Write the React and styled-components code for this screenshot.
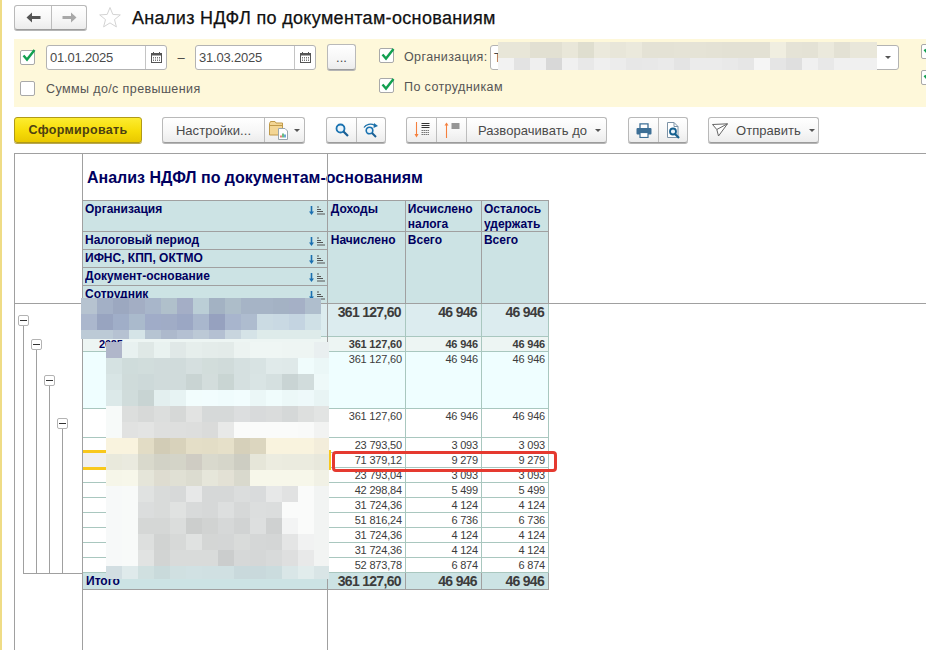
import React from 'react';
import styled, { createGlobalStyle } from 'styled-components';

const GlobalStyle = createGlobalStyle`
  html, body { margin: 0; padding: 0; height: 100%; background: #fff; }
  body { font-family: "Liberation Sans", Arial, sans-serif; overflow: hidden; }
  #root { height: 100%; }
`;

// размытые участки скриншота
const orgBlur = [
  ['#e8e6d8','#e8e6d8','#e2e0d2','#e2e0d2','#e9e7d9','#dfdecf','#ebe9dc','#e8e6d9','#ebe9dc','#e4e2d5','#e4e2d5','#e5e3d6','#e5e3d6','#e4e2d5','#e3e1d4','#e3e1d4','#e3e1d4','#f0eee0','#e5e3d6','#e4e2d5','#ebe9dc','#e3e1d4','#e9e7da','#e9e7da'],
  ['#f2f2f2','#e3e3e3','#efefef','#d8d8d8','#f0f0f0','#e8e8e8','#efefef','#ececec','#e7e7e7','#e8e8e8','#eaeaea','#e4e4e4','#ebebeb','#ebebeb','#e9e9e9','#e6e6e6','#f5f5f5','#e5e5e5','#dfdfdf','#f0f0f0','#e8e8e8','#f0f0f0','#f0f0f0','#f0f0f0'],
];

const topBlur = [
  ['#b6c3d0','#a3b0c6','#9ca8c0','#a3aec4','#a8b6ca','#b0c0cb','#a4aec6','#bbced6','#a3b2c3','#adbdc9','#a6b4c6','#a6b4c6','#a4b2c4','#a5b0c6','#afbecd'],
  ['#abb7cd','#98a4c0','#a0aec8','#aabacc','#a0acc8','#a0acc6','#9ba7c4','#a9b7cd','#96a1bf','#a8b5cd','#aebccf','#cbdbe3','#c9d9e3','#c4d4e1','#cfe0e6'],
  ['#bccad6','#bccad6','#b6c2d2','#d5e4e7','#b6c4d2','#adb9cc','#b4c0d2','#bcc9d6','#b4c0d2','#c8d5de','#d5e3e7','#deebea','#deebea','#deebea','#deebea'],
];

const rowsBlur = [
  ['#b0b6ca','#e8f1f0','#dfe8e6','#e9f2f0','#e0e8e7','#e6eeec','#e4ecea','#e3ebe9','#ecf3f1','#eff6f4','#eff6f4','#eef5f3','#eef5f3','#e9eff0'],
  ['#d5e2e2','#cfdcdb','#d1dddc','#d0dbdb','#d0dbdb','#d5dfdf','#d2dddb','#d0dbda','#d5e0e0','#d8e3e3','#e0eaea','#dfe9e9','#f0fcfc','#ebf7f7'],
  ['#d8e5e5','#cfdbda','#cdd9d9','#d0dbdb','#d0dbdb','#c9d4d3','#d3dddc','#c9d5d3','#d5e0e0','#d9e4e4','#d5e0e0','#c9d4d4','#d1dcdc','#eef9f9'],
  ['#dce9e9','#d0dcdb','#c8d4d3','#e3efef','#e7f3f3','#f2fdfd','#f2fdfe','#f0fcfd','#f2fdfe','#ebf7f7','#f0fcfc','#ecf8f8','#eef9fa','#e8f4f4'],
  ['#f7faf9','#dcdedd','#d7d9d8','#dcdedd','#d6d8d7','#e2e3e2','#d6d9d9','#d6d9d9','#dcdedf','#d8dadb','#dadcdc','#d5d8d8','#dddfde','#e2e4e3'],
  ['#f7faf9','#e1e2e1','#e3e4e3','#dedfde','#dedfde','#dddedd','#dadbda','#e8e9e8','#fafbfa','#fafbfa','#fafbfa','#fafbfa','#f9faf9','#f2f3f2'],
  ['#f9f3de','#f9f3de','#e2dcc5','#d2ccb6','#d8d2bb','#e4dec7','#e3ddc6','#e6e0c9','#d6d0ba','#dcd6bf','#f9f3de','#f9f3de','#f9f3de','#f3eddb'],
  ['#e9e9dc','#eaeadf','#d9d9cc','#d2d2c6','#d4d4c8','#cfccc3','#d9d9cd','#d6d6ca','#cdcdc2','#e6e6d9','#ecece0','#ebebdf','#ebebdf','#e8e8dc'],
  ['#f6f6e9','#f7f7ea','#e5e5d9','#dedcd0','#e0e0d4','#dcdcd0','#e6e6da','#e3e1d5','#d9d9cd','#f7f7ea','#f7f7ea','#f7f7ea','#f7f7ea','#f1f1e5'],
  ['#f7f9f9','#f8faf9','#e0e2e1','#d9dbda','#d7d9d9','#e7e8e8','#d6d8d8','#d6d8d8','#dbdddd','#d9dbdc','#e7e8e8','#e1e2e2','#fafbfa','#f2f4f3'],
  ['#f7f9f9','#f8faf9','#dbdddd','#d9dbda','#e0e2e1','#d8dada','#d6d8d8','#dddfdf','#d6d8d8','#dcdede','#dbdddd','#fafbfa','#fafbfa','#f2f4f3'],
  ['#f7f9f9','#f8faf9','#d5d7d6','#d5d7d6','#dbdddc','#cccecd','#d1d3d2','#d6d8d8','#d1d3d3','#dddfdf','#cfd1d1','#f3f4f4','#fafbfa','#f2f4f3'],
  ['#f7f9f9','#f8faf9','#dddfde','#d1d3d2','#d7d9d8','#e0e2e1','#d4d6d5','#d4d6d6','#d9dbda','#d5d7d7','#d4d6d6','#e4e5e5','#f1f2f2','#f2f4f3'],
  ['#f7f9f9','#f8faf9','#e1e3e2','#d2d4d3','#d9dbda','#d9dbda','#d9dbda','#cbcdcd','#d6d8d8','#d5d7d7','#d8dada','#dedfdf','#e8e9e9','#f2f4f3'],
  ['#d2dee2','#dfeaeb','#d0e0e0','#c9dadb','#d0e0e1','#d1e1e3','#d0e0e2','#d0e0e2','#c9d9dc','#c9d9dc','#cbdcde','#d9e6e7','#e1ecec','#d9e5e6'],
];

const detailRows = [
  ['23 793,50', '3 093'],
  ['71 379,12', '9 279', true],
  ['23 793,04', '3 093'],
  ['42 298,84', '5 499'],
  ['31 724,36', '4 124'],
  ['51 816,24', '6 736'],
  ['31 724,36', '4 124'],
  ['31 724,36', '4 124'],
  ['52 873,78', '6 874'],
];

const Page = styled.div`
  height: 650px;
  overflow: hidden;
  border-left: 2px solid #efdc86;
  padding-left: 12px;
  box-sizing: border-box;
`;

const TitleBar = styled.div`
  height: 39px;
  display: flex;
  align-items: flex-start;
  padding-top: 5px;
  box-sizing: border-box;
`;

const ButtonGroup = styled.div`
  display: flex;
  height: ${p => p.$h || 25}px;
  box-sizing: border-box;
  border: 1px solid #b9b9b9;
  border-bottom-color: #9c9c9c;
  border-radius: 3px;
  background: linear-gradient(#ffffff, #f6f6f6 60%, #ececec);
  box-shadow: 0 1px 0 #b5b5b5;
  color: #4a4a4a;
  font-size: 13px;
  letter-spacing: 0.05px;
  margin-left: ${p => p.$ml || 0}px;
`;

const GroupCell = styled.div`
  width: ${p => p.$w}px;
  display: flex;
  align-items: center;
  justify-content: center;
  gap: ${p => p.$gap || 0}px;
  padding-left: ${p => p.$pl || 0}px;
  box-sizing: border-box;
  & + & { border-left: 1px solid #bdbdbd; }
`;

const StarWrap = styled.div`
  margin: 0 10px 0 11px;
  height: 24px;
  display: flex;
  align-items: center;
`;

const PageTitle = styled.h1`
  margin: 0;
  font-size: 18px;
  line-height: 26px;
  font-weight: normal;
  color: #111;
  letter-spacing: 0.33px;
  -webkit-text-stroke: 0.25px #111;
`;

const FilterPanel = styled.div`
  height: 68px;
  background: #fef8da;
  display: flex;
  padding: 5px 0 0 6px;
  box-sizing: border-box;
`;

const FilterColumn = styled.div`
  width: ${p => p.$w}px;
  flex: none;
  display: flex;
  flex-direction: column;
  gap: ${p => p.$gap}px;
`;

const FilterRow = styled.div`
  display: flex;
  align-items: center;
  height: ${p => p.$h}px;
`;

const Check = styled.span`
  width: 15px;
  height: 15px;
  flex: none;
  box-sizing: border-box;
  border: 1px solid #a9a9a9;
  border-radius: 2px;
  background: #fff;
  display: inline-flex;
  align-items: center;
  justify-content: center;
  margin-right: ${p => p.$mr || 0}px;
  margin-bottom: ${p => p.$mb || 0}px;
`;

const FieldLabel = styled.span`
  font-size: 12.5px;
  color: #555;
  letter-spacing: 0.4px;
  white-space: nowrap;
  width: ${p => (p.$w ? `${p.$w}px` : 'auto')};
`;

const Field = styled.div`
  position: relative;
  width: ${p => p.$w}px;
  height: 25px;
  box-sizing: border-box;
  display: flex;
  flex: none;
  background: #fff;
  border: 1px solid #b3b3b3;
  border-radius: 3px;
  font-size: 13px;
  color: #4a4a4a;
`;

const FieldValue = styled.div`
  flex: 1;
  padding-left: 3px;
  line-height: 23px;
  letter-spacing: -0.2px;
`;

const FieldButton = styled.div`
  width: ${p => p.$w}px;
  flex: none;
  display: flex;
  align-items: center;
  justify-content: center;
  border-left: 1px solid #c4c4c4;
`;

const Dash = styled.span`
  width: 28px;
  text-align: center;
  font-size: 13px;
  color: #444;
`;

const Mosaic = styled.div`
  position: absolute;
  left: ${p => p.$left}px;
  top: ${p => p.$top}px;
  display: grid;
  grid-template-columns: repeat(${p => p.$cols}, 16px);
  grid-auto-rows: 16px;
  overflow: hidden;
  z-index: 4;
  width: ${p => p.$width}px;
  height: ${p => p.$height}px;
`;

const Toolbar = styled.div`
  margin-top: 10px;
  display: flex;
  height: 27px;
`;

const MainButton = styled.button`
  width: 128px;
  height: 26px;
  padding: 0;
  box-sizing: border-box;
  border: 1px solid #b09a18;
  border-radius: 3px;
  background: linear-gradient(#fdec30, #f6dc08 55%, #e9c800);
  box-shadow: 0 1px 0 #b9a850;
  font-family: inherit;
  font-weight: bold;
  font-size: 12.5px;
  letter-spacing: 0.3px;
  color: #4c4012;
  margin-right: 20px;
`;

const ToolGroup = styled(ButtonGroup)`
  height: 26px;
  margin-right: ${p => p.$mr}px;
`;

const Caret = styled.span`
  width: 0;
  height: 0;
  border-left: 3px solid transparent;
  border-right: 3px solid transparent;
  border-top: 3px solid #555;
`;

const Report = styled.div`
  position: relative;
  margin-top: 9px;
  height: 497px;
  display: flex;
  border-left: 1px solid #a0a0a0;
  border-top: 1px solid #a0a0a0;
`;

const Gutter = styled.div`
  width: 67px;
  flex: none;
  border-right: 1px solid #a0a0a0;
`;

const GutterHead = styled.div`
  height: 150px;
`;

const TreeLevels = styled.div`
  display: flex;
  margin-left: 8px;
  height: 269px;
  border-bottom: 1px solid #a0a0a0;
`;

const TreeLevel = styled.div`
  width: 13px;
  flex: none;
  display: flex;
  flex-direction: column;
  padding-top: ${p => p.$top}px;
  box-sizing: border-box;
`;

const TreeBox = styled.div`
  width: 11px;
  height: 11px;
  margin-left: -5px;
  flex: none;
  box-sizing: border-box;
  border: 1px solid #b3b3b3;
  border-radius: 2px;
  background: #fff;
  display: flex;
  align-items: center;
  justify-content: center;
  &::before {
    content: '';
    width: 7px;
    height: 1px;
    background: #333;
  }
`;

const TreeLine = styled.div`
  flex: 1;
  border-left: 1px solid #a0a0a0;
`;

const Sheet = styled.div`
  flex: 1;
`;

const ReportTitle = styled.div`
  height: 46px;
  padding: 14px 0 0 4px;
  box-sizing: border-box;
  font-size: 16px;
  line-height: 20px;
  font-weight: bold;
  color: #00005f;
`;

const Grid = styled.table`
  position: relative;
  z-index: 1;
  border-collapse: collapse;
  table-layout: fixed;
  width: 466px;
`;

const HeadRow = styled.tr`
  height: ${p => p.$h}px;
`;

const HeadCell = styled.td`
  background: #cce3e4;
  border: 1px solid #a0a0a0;
  border-left-width: ${p => (p.$first ? 0 : 1)}px;
  padding: 1px 2px 0 ${p => p.$pl || 2}px;
  vertical-align: top;
  font-size: 12px;
  line-height: 15px;
  font-weight: bold;
  color: #00005f;
`;

const HeadInner = styled.div`
  display: flex;
  justify-content: space-between;
  height: ${p => p.$h}px;
  overflow: hidden;
`;

const BodyRow = styled.tr`
  height: ${p => p.$h}px;
  background: ${p => p.$bg};
`;

const BodyCell = styled.td`
  position: relative;
  border: 1px solid #a9c7bf;
  border-left-width: ${p => (p.$first ? 0 : 1)}px;
  padding: ${p => (p.$big ? '0 4px 0 0' : p.$bold ? '1px 3px 0 0' : '0 3px 0 0')};
  vertical-align: top;
  text-align: right;
  font-size: ${p => (p.$big ? 14 : 11)}px;
  letter-spacing: ${p => (p.$big ? -0.7 : -0.2)}px;
  line-height: ${p => (p.$big ? 17 : p.$bold ? 13 : 14)}px;
  font-weight: ${p => (p.$bold ? 'bold' : 'normal')};
  color: #3c3c3c;
  white-space: nowrap;
`;

const YearCell = styled(BodyCell)`
  text-align: left;
  padding-left: 16px;
  color: #00005f;
`;

const CurrentCell = styled(BodyCell)`
  background: #f0f0f0;
  &::after {
    content: '';
    position: absolute;
    left: 0;
    right: -4px;
    top: -3px;
    bottom: -3px;
    border: solid #f8c81c;
    border-width: 3px 3px 3px 0;
    z-index: 3;
  }
`;

const TotalCell = styled.td`
  border: 1px solid #a0a0a0;
  border-left-width: ${p => (p.$first ? 0 : 1)}px;
  background: #cce3e4;
  padding: 0 ${p => (p.$first ? 3 : 4)}px 0 ${p => (p.$first ? 3 : 0)}px;
  text-align: ${p => (p.$first ? 'left' : 'right')};
  font-size: ${p => (p.$first ? 12 : 14)}px;
  letter-spacing: ${p => (p.$first ? 0 : -0.7)}px;
  line-height: 15px;
  font-weight: bold;
  color: ${p => (p.$first ? '#00005f' : '#3c3c3c')};
  white-space: nowrap;
`;

const FreezeV = styled.div`
  position: absolute;
  left: 312px;
  top: 0;
  bottom: 0;
  width: 1px;
  background: #a0a0a0;
  z-index: 2;
`;

const FreezeH = styled.div`
  position: absolute;
  left: 0;
  right: 0;
  top: 149px;
  height: 1px;
  background: #a0a0a0;
`;

const RedFrame = styled.div`
  position: absolute;
  left: 317px;
  top: 297px;
  width: 225px;
  height: 21px;
  box-sizing: border-box;
  border: 3px solid #e53a30;
  border-radius: 4px;
  z-index: 5;
`;

const BackIcon = ({ color, flip }) => (
  <svg width="15" height="11" viewBox="0 0 15 11" style={flip ? { transform: 'scaleX(-1)' } : undefined}>
    <path d="M0.5 5.5 6 0.5V4H14.5V7H6V10.5Z" fill={color} />
  </svg>
);

const StarIcon = () => (
  <svg width="24" height="24" viewBox="0 0 24 24">
    <path d="M12 2.5 14.8 9.4 22.3 9.9 16.5 14.6 18.4 21.9 12 17.9 5.6 21.9 7.5 14.6 1.7 9.9 9.2 9.4Z" fill="#fff" stroke="#d4d4d4" strokeWidth="1" />
  </svg>
);

const CheckMark = () => (
  <svg width="15" height="15" viewBox="0 0 15 15" style={{ flex: 'none', margin: '-3px -2px 0 0' }}>
    <path d="M2.5 7.5 6 11.5 13.5 2" fill="none" stroke="#12a050" strokeWidth="2.4" />
  </svg>
);

const CalendarIcon = () => (
  <svg width="11" height="11" viewBox="0 0 11 11">
    <path d="M2.5 0v2M8.5 0v2" stroke="#555" />
    <rect x="0.5" y="1.5" width="10" height="9" fill="#fff" stroke="#555" />
    <rect x="0.5" y="1.5" width="10" height="2" fill="#555" />
    <path d="M2 5.5h7M2 7h7M2 8.5h7" stroke="#777" strokeDasharray="1 1" />
  </svg>
);

const SettingsIcon = () => (
  <svg width="20" height="20" viewBox="0 0 20 20">
    <path d="M0.5 3.5 1.5 1.5H6L7 3H13.5V15H0.5Z" fill="#f3d695" stroke="#c09a4a" />
    <path d="M0.5 5.5H13.5" stroke="#c09a4a" />
    <path d="M9.5 8.5H16L18.5 11V19.5H9.5Z" fill="#fff" stroke="#9aa6ae" />
    <path d="M12 17.5v-2" stroke="#e2574c" strokeWidth="1.5" />
    <path d="M14 17.5v-4" stroke="#3ea65a" strokeWidth="1.5" />
    <path d="M16 17.5v-3" stroke="#3a88c8" strokeWidth="1.5" />
  </svg>
);

const SearchIcon = () => (
  <svg width="14" height="14" viewBox="0 0 14 14">
    <circle cx="5.5" cy="5.5" r="4" fill="#eaf4fb" stroke="#1a72b0" strokeWidth="1.8" />
    <path d="M8.5 8.5 13 13" stroke="#1a5f94" strokeWidth="2.2" />
  </svg>
);

const SearchAgainIcon = () => (
  <svg width="16" height="15" viewBox="0 0 16 15">
    <path d="M1 4.5C3 1 8 0.2 11.5 2.2" fill="none" stroke="#1a6fa8" strokeWidth="1.3" />
    <path d="M11 0 15 3 10.5 5Z" fill="#1a6fa8" />
    <circle cx="6.5" cy="7.5" r="3.3" fill="#eaf4fb" stroke="#1a72b0" strokeWidth="1.6" />
    <path d="M9 10 13 14" stroke="#1a5f94" strokeWidth="2" />
  </svg>
);

const SortIcon = ({ up }) => (
  <svg width="16" height="16" viewBox="0 0 16 16">
    {up ? (
      <>
        <path d="M2.5 16V2" stroke="#f5803e" strokeWidth="1.1" />
        <path d="M0.5 3.5 2.5 0.5 4.5 3.5Z" fill="#f5803e" />
        <path d="M7.5 2h8M7.5 4h8M7.5 6h8" stroke="#333" strokeWidth="1" />
      </>
    ) : (
      <>
        <path d="M2.5 0V13" stroke="#f5803e" strokeWidth="1.1" />
        <path d="M0.5 12 2.5 15.5 4.5 12Z" fill="#f5803e" />
        <path d="M7.5 1.5h8M7.5 3.5h8M7.5 5.5h8" stroke="#333" strokeWidth="1" />
        <path d="M7.5 8.5h8M7.5 10.5h8M7.5 12.5h8" stroke="#777" strokeWidth="1" strokeDasharray="1.5 0.5" />
      </>
    )}
  </svg>
);

const PrintIcon = () => (
  <svg width="16" height="15" viewBox="0 0 16 15">
    <path d="M4 6V0.8H12V6" fill="#fff" stroke="#3d6f96" strokeWidth="1.3" />
    <rect x="0.5" y="5" width="15" height="6.5" rx="1" fill="#3d6f96" />
    <rect x="4" y="9.5" width="8" height="5" fill="#fff" stroke="#3d6f96" strokeWidth="1.2" />
  </svg>
);

const PreviewIcon = () => (
  <svg width="15" height="17" viewBox="0 0 15 17">
    <path d="M1.5 0.5H8L12 4.5V15.5H1.5Z" fill="#fff" stroke="#7d93a6" />
    <path d="M8 0.5V4.5H12" fill="none" stroke="#7d93a6" />
    <circle cx="7" cy="9.5" r="3" fill="#eaf4fb" stroke="#15608f" strokeWidth="1.8" />
    <path d="M9 12 13 16" stroke="#15608f" strokeWidth="2.2" />
  </svg>
);

const SendIcon = () => (
  <svg width="16" height="14" viewBox="0 0 16 14">
    <path d="M0.5 1.5 15.5 0.8 6.5 13 4.8 6.5ZM4.8 6.5 15.5 0.8" fill="#fff" stroke="#666" strokeWidth="1" strokeLinejoin="round" />
  </svg>
);

const ColumnSortIcon = () => (
  <svg width="16" height="10" viewBox="0 0 16 10" style={{ flex: 'none', marginTop: 3 }}>
    <path d="M2.5 1V7" stroke="#1a6fb0" strokeWidth="1.6" />
    <path d="M0 6.5H5L2.5 10Z" fill="#1a6fb0" />
    <path d="M8 2H10M8 4.5H12M8 6.5H14M8 9H16" stroke="#555" strokeWidth="1" />
  </svg>
);

const Blur = ({ rows, ...rest }) => (
  <Mosaic $cols={rows[0].length} {...rest}>
    {rows.flat().map((color, i) => (
      <div key={i} style={{ background: color }} />
    ))}
  </Mosaic>
);

const Checkbox = ({ checked, mr, mb }) => <Check $mr={mr} $mb={mb}>{checked && <CheckMark />}</Check>;

const DateField = ({ value }) => (
  <Field $w={121}>
    <FieldValue>{value}</FieldValue>
    <FieldButton $w={20}><CalendarIcon /></FieldButton>
  </Field>
);

const LeftHead = ({ title, h }) => (
  <HeadInner $h={h}>
    <span>{title}</span>
    <ColumnSortIcon />
  </HeadInner>
);

const App = () => (
  <Page>
    <GlobalStyle />
    <TitleBar>
      <ButtonGroup>
        <GroupCell $w={36}><BackIcon color="#555" /></GroupCell>
        <GroupCell $w={35}><BackIcon color="#a8a8a8" flip /></GroupCell>
      </ButtonGroup>
      <StarWrap><StarIcon /></StarWrap>
      <PageTitle>Анализ НДФЛ по документам-основаниям</PageTitle>
    </TitleBar>

    <FilterPanel>
      <FilterColumn $w={359} $gap={11}>
        <FilterRow $h={26}>
          <Checkbox checked mr={11} />
          <DateField value="01.01.2025" />
          <Dash>–</Dash>
          <DateField value="31.03.2025" />
          <ButtonGroup $h={26} $ml={11}>
            <GroupCell $w={27}>...</GroupCell>
          </ButtonGroup>
        </FilterRow>
        <FilterRow $h={15}>
          <Checkbox mr={11} />
          <FieldLabel>Суммы до/с превышения</FieldLabel>
        </FilterRow>
      </FilterColumn>
      <FilterColumn $w={542} $gap={8}>
        <FilterRow $h={26}>
          <Checkbox checked mr={10} mb={3} />
          <FieldLabel $w={86}>Организация:</FieldLabel>
          <Field $w={409}>
            <FieldValue>Т</FieldValue>
            <FieldButton $w={21}><Caret /></FieldButton>
            <Blur rows={orgBlur} $left={7} $top={-4} $width={379} $height={28} />
          </Field>
        </FilterRow>
        <FilterRow $h={18}>
          <Checkbox checked mr={10} mb={3} />
          <FieldLabel>По сотрудникам</FieldLabel>
        </FilterRow>
      </FilterColumn>
      <FilterColumn $w={20} $gap={12}>
        <FilterRow $h={14}><Checkbox checked /></FilterRow>
        <FilterRow $h={14}><Checkbox checked /></FilterRow>
      </FilterColumn>
    </FilterPanel>

    <Toolbar>
      <MainButton>Сформировать</MainButton>
      <ToolGroup $mr={21}>
        <GroupCell $w={101}>Настройки...</GroupCell>
        <GroupCell $w={40} $gap={5}><SettingsIcon /><Caret /></GroupCell>
      </ToolGroup>
      <ToolGroup $mr={20}>
        <GroupCell $w={29}><SearchIcon /></GroupCell>
        <GroupCell $w={29}><SearchAgainIcon /></GroupCell>
      </ToolGroup>
      <ToolGroup $mr={21}>
        <GroupCell $w={29}><SortIcon /></GroupCell>
        <GroupCell $w={30}><SortIcon up /></GroupCell>
        <GroupCell $w={140} $gap={8} $pl={6}>Разворачивать до<Caret /></GroupCell>
      </ToolGroup>
      <ToolGroup $mr={20}>
        <GroupCell $w={29}><PrintIcon /></GroupCell>
        <GroupCell $w={29}><PreviewIcon /></GroupCell>
      </ToolGroup>
      <ToolGroup $mr={0}>
        <GroupCell $w={109} $gap={8}><SendIcon />Отправить<Caret /></GroupCell>
      </ToolGroup>
    </Toolbar>

    <Report>
      <FreezeH />
      <FreezeV />
      <Gutter>
        <GutterHead />
        <TreeLevels>
          {[11, 35, 71, 114].map(top => (
            <TreeLevel key={top} $top={top}>
              <TreeBox />
              <TreeLine />
            </TreeLevel>
          ))}
        </TreeLevels>
      </Gutter>
      <Sheet>
        <ReportTitle>Анализ НДФЛ по документам-основаниям</ReportTitle>
        <Grid>
          <colgroup>
            <col style={{ width: 244 }} />
            <col style={{ width: 78 }} />
            <col style={{ width: 76 }} />
            <col style={{ width: 67 }} />
          </colgroup>
          <tbody>
            <HeadRow $h={31}>
              <HeadCell $first><LeftHead title="Организация" h={29} /></HeadCell>
              <HeadCell $pl={3}>Доходы</HeadCell>
              <HeadCell><HeadInner $h={29}>Исчислено налога</HeadInner></HeadCell>
              <HeadCell><HeadInner $h={29}>Осталось удержать</HeadInner></HeadCell>
            </HeadRow>
            <HeadRow $h={18}>
              <HeadCell $first><LeftHead title="Налоговый период" h={15} /></HeadCell>
              <HeadCell $pl={3} rowSpan={4}>Начислено</HeadCell>
              <HeadCell rowSpan={4}>Всего</HeadCell>
              <HeadCell rowSpan={4}>Всего</HeadCell>
            </HeadRow>
            <HeadRow $h={18}>
              <HeadCell $first><LeftHead title="ИФНС, КПП, ОКТМО" h={15} /></HeadCell>
            </HeadRow>
            <HeadRow $h={18}>
              <HeadCell $first><LeftHead title="Документ-основание" h={15} /></HeadCell>
            </HeadRow>
            <HeadRow $h={18}>
              <HeadCell $first><LeftHead title="Сотрудник" h={15} /></HeadCell>
            </HeadRow>

            <BodyRow $h={33} $bg="#dcecef">
              <BodyCell $first />
              <BodyCell $big $bold>361 127,60</BodyCell>
              <BodyCell $big $bold>46 946</BodyCell>
              <BodyCell $big $bold>46 946</BodyCell>
            </BodyRow>
            <BodyRow $h={15} $bg="#edf5f3">
              <YearCell $first $bold>2025</YearCell>
              <BodyCell $bold>361 127,60</BodyCell>
              <BodyCell $bold>46 946</BodyCell>
              <BodyCell $bold>46 946</BodyCell>
            </BodyRow>
            <BodyRow $h={57} $bg="#effeff">
              <BodyCell $first />
              <BodyCell>361 127,60</BodyCell>
              <BodyCell>46 946</BodyCell>
              <BodyCell>46 946</BodyCell>
            </BodyRow>
            <BodyRow $h={29} $bg="#fff">
              <BodyCell $first />
              <BodyCell>361 127,60</BodyCell>
              <BodyCell>46 946</BodyCell>
              <BodyCell>46 946</BodyCell>
            </BodyRow>
            {detailRows.map(([income, tax, current], i) => (
              <BodyRow key={i} $h={15} $bg="#fff">
                {current ? <CurrentCell $first /> : <BodyCell $first />}
                <BodyCell>{income}</BodyCell>
                <BodyCell>{tax}</BodyCell>
                <BodyCell>{tax}</BodyCell>
              </BodyRow>
            ))}
            <HeadRow $h={17}>
              <TotalCell $first>Итого</TotalCell>
              <TotalCell>361 127,60</TotalCell>
              <TotalCell>46 946</TotalCell>
              <TotalCell>46 946</TotalCell>
            </HeadRow>
          </tbody>
        </Grid>
      </Sheet>
      <Blur rows={topBlur} $left={66} $top={144} $width={240} $height={41} />
      <Blur rows={rowsBlur} $left={91} $top={188} $width={223} $height={237} />
      <RedFrame />
    </Report>
  </Page>
);

export default App;
